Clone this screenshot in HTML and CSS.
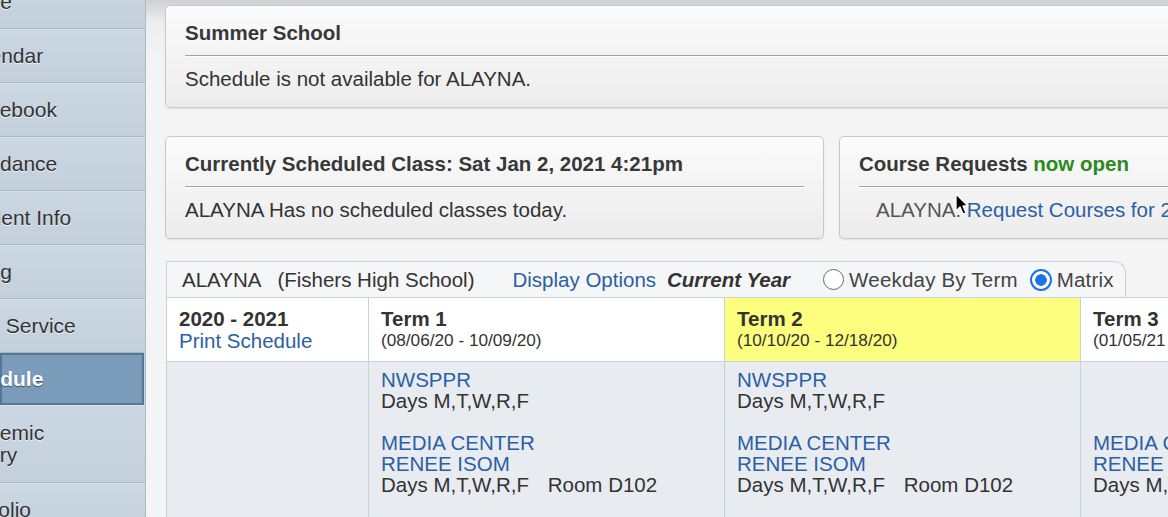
FILE: index.html
```html
<!DOCTYPE html>
<html lang="en">
<head>
    <meta charset="UTF-8">
    <title>Schedule - Campus Portal</title>
    <link rel="stylesheet" href="styles.css">
</head>
<body>
    <div class="page">
        <nav class="sidebar">
            <a class="nav-item home">Home</a>
            <a class="nav-item calendar">Calendar</a>
            <a class="nav-item gradebook">Gradebook</a>
            <a class="nav-item attendance">Attendance</a>
            <a class="nav-item student">Student Info</a>
            <a class="nav-item billing">Billing</a>
            <a class="nav-item food">Food Service</a>
            <a class="nav-item active">Schedule</a>
            <a class="nav-item history tall">Academic<br>History</a>
            <a class="nav-item portfolio">Portfolio</a>
        </nav>

        <main class="main">
            <section class="panel">
                <h2 class="panel-title">Summer School</h2>
                <p class="panel-body">Schedule is not available for ALAYNA.</p>
            </section>

            <div class="panel-row">
                <section class="panel current">
                    <h2 class="panel-title">Currently Scheduled Class: Sat Jan 2, 2021 4:21pm</h2>
                    <p class="panel-body">ALAYNA Has no scheduled classes today.</p>
                </section>
                <section class="panel requests">
                    <h2 class="panel-title">Course Requests <span class="open">now open</span></h2>
                    <p class="panel-body indent"><span class="muted">ALAYNA:</span> <a class="link">Request Courses for 2021-22</a></p>
                </section>
            </div>

            <section class="schedule">
                <div class="schedule-tab">
                    <span>ALAYNA</span>
                    <span class="school">(Fishers High School)</span>
                    <a class="link options">Display Options</a>
                    <b class="year">Current Year</b>
                    <span class="radio"></span>
                    <span class="radio-label">Weekday By Term</span>
                    <span class="radio checked"></span>
                    <span class="radio-label">Matrix</span>
                </div>

                <div class="matrix">
                    <div class="cell head">
                        <div class="term-name">2020 - 2021</div>
                        <a class="link">Print Schedule</a>
                    </div>
                    <div class="cell head">
                        <div class="term-name">Term 1</div>
                        <div class="term-dates">(08/06/20 - 10/09/20)</div>
                    </div>
                    <div class="cell head current-term">
                        <div class="term-name">Term 2</div>
                        <div class="term-dates">(10/10/20 - 12/18/20)</div>
                    </div>
                    <div class="cell head">
                        <div class="term-name">Term 3</div>
                        <div class="term-dates">(01/05/21 - 03/12/21)</div>
                    </div>

                    <div class="cell body"></div>
                    <div class="cell body">
                        <div class="period">
                            <a class="link">NWSPPR</a>
                            <div>Days M,T,W,R,F</div>
                        </div>
                        <div class="period">
                            <a class="link">MEDIA CENTER</a>
                            <a class="link">RENEE ISOM</a>
                            <div>Days M,T,W,R,F <span class="room">Room D102</span></div>
                        </div>
                    </div>
                    <div class="cell body">
                        <div class="period">
                            <a class="link">NWSPPR</a>
                            <div>Days M,T,W,R,F</div>
                        </div>
                        <div class="period">
                            <a class="link">MEDIA CENTER</a>
                            <a class="link">RENEE ISOM</a>
                            <div>Days M,T,W,R,F <span class="room">Room D102</span></div>
                        </div>
                    </div>
                    <div class="cell body">
                        <div class="period empty"></div>
                        <div class="period">
                            <a class="link">MEDIA CENTER</a>
                            <a class="link">RENEE ISOM</a>
                            <div>Days M,T,W,R,F <span class="room">Room D102</span></div>
                        </div>
                    </div>
                </div>
            </section>
        </main>
    </div>

    <svg class="cursor" width="16" height="24" viewBox="0 0 16 24">
        <path d="M1 1 L1 18 L5 14 L8 21 L11 20 L8 13 L13 13 Z" fill="#000" stroke="#fff" stroke-width="1.3" stroke-linejoin="round"/>
    </svg>
</body>
</html>
```

FILE: styles.css
```css
:root {
    --text: #333;
    --link: #2b60a4;
    --line: #c9d2db;
    --cell-bg: #e8ecf1;
}
body {
    margin: 0;
    font-family: "Liberation Sans", Arial, sans-serif;
    font-size: 20.5px;
    color: var(--text);
    overflow: hidden;
    height: 517px;
    background: #f3f3f3;
}
.page {
    display: flex;
    width: 1400px;
    min-height: 517px;
}

/* sidebar - labels run off the left edge of the window */
.sidebar {
    width: 145px;
    flex: none;
    margin-top: -25px;
    background: #c7d3df;
    border-right: 1px solid #aeb9c4;
    box-shadow: 2px 0 0 #e8edf1;
    overflow: hidden;
    font-size: 21px;
}
.nav-item {
    display: flex;
    align-items: center;
    min-height: 53px;
    margin-left: -44px;
    border-bottom: 1px solid #aab6c2;
    box-shadow: inset 0 1px 0 #d9e2ea;
    background: linear-gradient(#cbd7e3, #c3cfdb);
    text-shadow: 0 1px 0 #eef3f7;
    white-space: nowrap;
    line-height: 22px;
}
.nav-item.calendar { margin-left: -42px; }
.nav-item.gradebook { margin-left: -47px; }
.nav-item.attendance { margin-left: -49px; }
.nav-item.student { margin-left: -42px; }
.nav-item.food { margin-left: -48px; }
.nav-item.history { margin-left: -48px; }
.nav-item.portfolio { margin-left: -46px; }
.nav-item.tall { min-height: 77px; }
.nav-item.active {
    margin-left: 0;
    min-height: 48px;
    border: 2px solid #587592;
    margin-right: 1px;
    background: #7b9bba;
    color: #fff;
    font-weight: bold;
    text-shadow: 0 1px 1px #3a4f63;
    box-shadow: none;
    text-indent: -52px;
}

/* main column */
.main {
    flex: 1;
    padding: 5px 0 0 19px;
    background: linear-gradient(#cdd1d5 0, #eceeef 22px, #f4f4f4 60px);
}
.panel {
    background: linear-gradient(#fbfbfb, #ececec);
    border: 1px solid #c9c9c9;
    border-radius: 5px;
    box-shadow: 0 1px 2px rgba(0, 0, 0, 0.08);
    padding: 15px 19px 16px;
}
.panel-title {
    margin: 0;
    font-size: 20.5px;
    line-height: 24px;
    padding-bottom: 10px;
    border-bottom: 1px solid #a3a3a3;
    box-shadow: 0 1px 0 #fff;
    color: #383838;
}
.panel-body {
    margin: 11px 0 0;
    line-height: 24px;
}
.panel-body.indent { padding-left: 17px; white-space: nowrap; }
.muted { color: #555; }
.open { color: #2b8a20; }
.link { color: var(--link); text-decoration: none; cursor: pointer; }

.panel-row {
    display: flex;
    gap: 15px;
    margin-top: 28px;
}
.panel.current { width: 619px; flex: none; }
.panel.requests { flex: 1; }

/* schedule matrix */
.schedule { margin: 22px 0 0 1px; }
.schedule-tab {
    display: flex;
    align-items: center;
    width: 943px;
    height: 35px;
    padding-left: 15px;
    background: #f5f6f7;
    border: 1px solid var(--line);
    border-bottom: none;
    border-radius: 0 12px 0 0;
    white-space: nowrap;
}
.school { margin-left: 16px; }
.options { margin-left: 38px; }
.year { margin-left: 11px; font-style: italic; }
.radio {
    width: 19px;
    height: 19px;
    border: 1.5px solid #6b6b6b;
    border-radius: 50%;
    background: #fff;
    margin: 0 5px 0 33px;
    flex: none;
}
.radio.checked {
    margin-left: 12px;
    border: 2px solid #1a73e8;
    background: radial-gradient(circle, #1a73e8 0 5.5px, #fff 6px);
    width: 18px;
    height: 18px;
}
.radio-label { color: #444; letter-spacing: 0.2px; }

.matrix {
    display: grid;
    grid-template-columns: 202px 356px 356px 356px;
    border-top: 1px solid var(--line);
    border-left: 1px solid var(--line);
}
.cell {
    border-right: 1px solid var(--line);
    border-bottom: 1px solid var(--line);
    padding: 0 12px;
}
.cell.head {
    background: #fff;
    padding-top: 10px;
    box-sizing: border-box;
    height: 64px;
}
.cell.current-term { background: #fdfd7e; }
.term-name { font-weight: bold; line-height: 22px; }
.head .link { display: block; line-height: 21px; }
.term-dates { font-size: 17.2px; line-height: 21px; }
.cell.body {
    background: var(--cell-bg);
    padding-top: 7px;
    height: 200px;
    line-height: 21px;
}
.period { margin-bottom: 21px; }
.period .link { display: block; }
.period.empty { height: 42px; }
.room { margin-left: 13px; }

.cursor {
    position: absolute;
    left: 955px;
    top: 193px;
}
```
